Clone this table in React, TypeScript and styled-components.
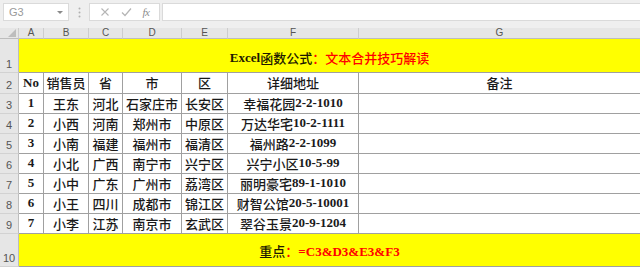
import React from "react";
import styled, { createGlobalStyle } from "styled-components";

const GlobalStyle = createGlobalStyle`
  html, body { margin: 0; padding: 0; background: #ffffff; overflow: hidden; }
  * { box-sizing: border-box; }
`;

const Page = styled.div`
  width: 640px;
  height: 268px;
  overflow: hidden;
  display: flex;
  flex-direction: column;
  font-family: "Liberation Sans", "Noto Sans CJK SC", sans-serif;
`;

const Toolbar = styled.div`
  height: 28px;
  flex: none;
  background: #efefef;
  display: flex;
  align-items: flex-start;
  padding: 3px 0 0 3px;
`;

const NameBox = styled.div`
  width: 66px;
  height: 18px;
  background: #ffffff;
  border: 1px solid #dadada;
  display: flex;
  align-items: center;
  justify-content: space-between;
  padding: 0 5px 0 5px;
  font-size: 11px;
  color: #9a9a9a;
`;

const Caret = styled.span`
  width: 0;
  height: 0;
  border-left: 3px solid transparent;
  border-right: 3px solid transparent;
  border-top: 3px solid #8a8a8a;
`;

const Grip = styled.div`
  width: 20px;
  height: 18px;
  display: flex;
  align-items: center;
  justify-content: center;
`;

const FxBox = styled.div`
  width: 71px;
  height: 18px;
  background: #ffffff;
  border: 1px solid #dadada;
  display: flex;
  align-items: center;
  justify-content: space-around;
  padding: 0 4px;
  color: #b8b8b8;
`;

const FxLabel = styled.span`
  font-family: "Liberation Serif", serif;
  font-style: italic;
  font-size: 11px;
  color: #8c8c8c;
  letter-spacing: -0.5px;
`;

const FormulaInput = styled.div`
  flex: 1;
  height: 18px;
  margin-left: 2px;
  background: #ffffff;
  border: 1px solid #dadada;
  border-right: none;
`;

const Sheet = styled.div`
  flex: 1;
  display: grid;
  grid-template-columns: 19px 25px 45px 34px 59px 46px 131px 1fr;
  grid-template-rows: 11px 34px 21px repeat(7, 20px) 33px 1fr;
`;

const Corner = styled.div`
  background: #e6e6e6;
  border-right: 1px solid #cdcdcd;
  border-bottom: 1px solid #bdbdbd;
  display: flex;
  align-items: flex-end;
  justify-content: flex-end;
  padding: 0 2px 1px 0;
`;

const ColHead = styled.div<{ $last?: boolean }>`
  background: #e6e6e6;
  border-right: ${(p) => (p.$last ? "none" : "1px solid #cdcdcd")};
  border-bottom: 1px solid #bdbdbd;
  color: #555555;
  font-size: 10px;
  line-height: 10px;
  display: flex;
  align-items: center;
  justify-content: center;
`;

const RowHead = styled.div`
  background: #e6e6e6;
  border-right: 1px solid #bdbdbd;
  border-bottom: 1px solid #d2d2d2;
  color: #555555;
  font-size: 11px;
  line-height: 11px;
  display: flex;
  align-items: flex-end;
  justify-content: center;
  padding-bottom: 2px;
`;

const Banner = styled.div<{ $lift?: number }>`
  grid-column: 2 / 9;
  background: #ffff00;
  border-bottom: 1px solid #a0a0a0;
  display: flex;
  align-items: center;
  justify-content: center;
  padding-top: ${(p) => p.$lift ?? 0}px;
  font-family: "Liberation Serif", "Noto Sans CJK SC", serif;
  font-weight: 700;
  font-size: 13px;
  color: #1e1a00;
  white-space: pre;
`;

const Red = styled.span`
  color: #ff0000;
`;

const Han = styled.span`
  font-family: "Noto Sans CJK SC", sans-serif;
  font-size: 13px;
  font-weight: 500;
`;

const Cell = styled.div<{ $last?: boolean }>`
  background: #ffffff;
  border-right: ${(p) => (p.$last ? "none" : "1px solid #a0a0a0")};
  border-bottom: 1px solid #a0a0a0;
  display: flex;
  align-items: center;
  justify-content: center;
  white-space: pre;
  font-family: "Liberation Serif", "Noto Sans CJK SC", serif;
  font-weight: 700;
  font-size: 13px;
  color: #1a1a1a;
  padding-bottom: 1px;
`;

const Filler = styled.div`
  grid-column: 1 / -1;
  background: #ffffff;
`;

const columns = ["A", "B", "C", "D", "E", "F", "G"];

const header = ["No", "销售员", "省", "市", "区", "详细地址", "备注"];

const rows: string[][] = [
  ["1", "王东", "河北", "石家庄市", "长安区", "幸福花园2-2-1010"],
  ["2", "小西", "河南", "郑州市", "中原区", "万达华宅10-2-1111"],
  ["3", "小南", "福建", "福州市", "福清区", "福州路2-2-1099"],
  ["4", "小北", "广西", "南宁市", "兴宁区", "兴宁小区10-5-99"],
  ["5", "小中", "广东", "广州市", "荔湾区", "丽明豪宅89-1-1010"],
  ["6", "小王", "四川", "成都市", "锦江区", "财智公馆20-5-10001"],
  ["7", "小李", "江苏", "南京市", "玄武区", "翠谷玉景20-9-1204"],
];

const Mixed = ({ text }: { text: string }) => (
  <>
    {text
      .split(/([\u3000-\u9fff\uff00-\uffef]+)/)
      .filter((s) => s.length > 0)
      .map((s, i) =>
        /[\u3000-\u9fff\uff00-\uffef]/.test(s) ? <Han key={i}>{s}</Han> : <span key={i}>{s}</span>
      )}
  </>
);

const CrossIcon = () => (
  <svg width="10" height="10" viewBox="0 0 10 10">
    <path d="M1.5 1.5 L8.5 8.5 M8.5 1.5 L1.5 8.5" stroke="#b5b5b5" strokeWidth="1.1" fill="none" />
  </svg>
);

const CheckIcon = () => (
  <svg width="11" height="10" viewBox="0 0 11 10">
    <path d="M1 5.5 L4 8.5 L10 1.5" stroke="#b5b5b5" strokeWidth="1.2" fill="none" />
  </svg>
);

const GripIcon = () => (
  <svg width="3" height="11" viewBox="0 0 3 11">
    <circle cx="1.5" cy="1.5" r="1" fill="#b0b0b0" />
    <circle cx="1.5" cy="5.5" r="1" fill="#b0b0b0" />
    <circle cx="1.5" cy="9.5" r="1" fill="#b0b0b0" />
  </svg>
);

const CornerIcon = () => (
  <svg width="8" height="8" viewBox="0 0 8 8">
    <polygon points="8,0 8,8 0,8" fill="#bdbdbd" />
  </svg>
);

export default function App() {
  return (
    <>
      <GlobalStyle />
      <Page>
        <Toolbar>
          <NameBox>
            <span>G3</span>
            <Caret />
          </NameBox>
          <Grip>
            <GripIcon />
          </Grip>
          <FxBox>
            <CrossIcon />
            <CheckIcon />
            <FxLabel>fx</FxLabel>
          </FxBox>
          <FormulaInput />
        </Toolbar>
        <Sheet>
          <Corner>
            <CornerIcon />
          </Corner>
          {columns.map((c, i) => (
            <ColHead key={c} $last={i === columns.length - 1}>
              {c}
            </ColHead>
          ))}

          <RowHead>1</RowHead>
          <Banner $lift={4}>
            Excel<Han>函数公式</Han>
            <Red>
              <Han>：文本合并技巧解读</Han>
            </Red>
          </Banner>

          <RowHead>2</RowHead>
          {header.map((h, i) => (
            <Cell key={h} $last={i === header.length - 1}>
              <Mixed text={h} />
            </Cell>
          ))}

          {rows.map((r, ri) => (
            <React.Fragment key={ri}>
              <RowHead>{ri + 3}</RowHead>
              {r.map((v, ci) => (
                <Cell key={ci}>
                  <Mixed text={v} />
                </Cell>
              ))}
              <Cell $last />
            </React.Fragment>
          ))}

          <RowHead>10</RowHead>
          <Banner>
            <Han>重点</Han>
            <Red>
              <Han>：</Han>=C3&amp;D3&amp;E3&amp;F3
            </Red>
          </Banner>

          <Filler />
        </Sheet>
      </Page>
    </>
  );
}
